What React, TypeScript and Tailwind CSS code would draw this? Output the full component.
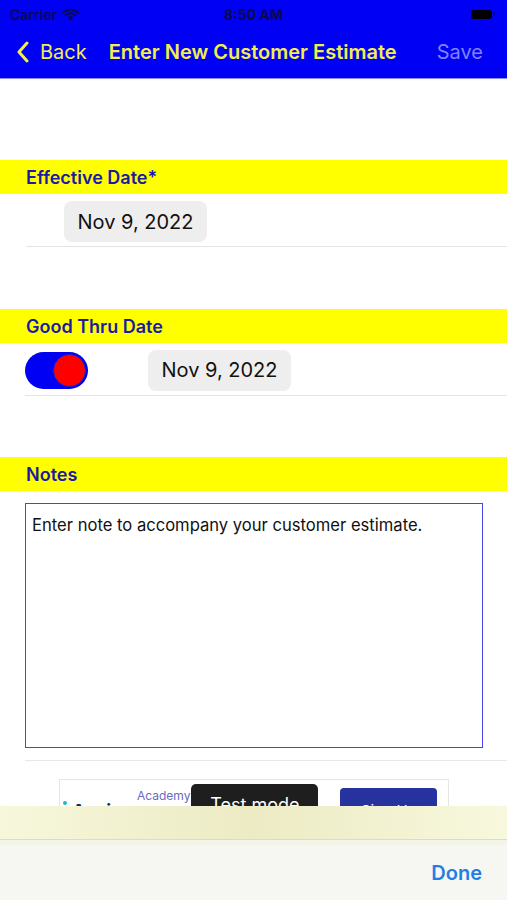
import React from 'react'

const font = { fontFamily: 'Inter, "Noto Sans", sans-serif' }

function SectionHeader({ title }: { title: string }) {
  return (
    <div className="h-[34px] bg-[#ffff00] flex items-center pl-[26px] pt-[1px]">
      <span className="text-[18px] font-semibold text-[#1a1aa6]">{title}</span>
    </div>
  )
}

function DatePill({ label }: { label: string }) {
  return (
    <div className="h-[41px] w-[143px] rounded-[8px] bg-[#eeeeef] flex items-center justify-center text-[20px] text-[#111]">
      {label}
    </div>
  )
}

export default function App() {
  return (
    <div className="relative w-[507px] h-[900px] overflow-hidden bg-white" style={font}>
      {/* status + nav bar */}
      <div className="bg-[#0000f5] h-[79px] border-b border-[#8c8cff]">
        <div className="h-[28px] flex items-center justify-between px-[10px] text-[14px] font-semibold text-[#0a0a4a]">
          <div className="flex items-center gap-[5px]">
            <span>Carrier</span>
            <svg width="17" height="13" viewBox="0 0 17 13">
              <path d="M8.5 12.5 L5.6 9.4 A4.2 4.2 0 0 1 11.4 9.4 Z" fill="#0a0a4a" />
              <path d="M3.4 7.2 A7.4 7.4 0 0 1 13.6 7.2" stroke="#0a0a4a" strokeWidth="2" fill="none" strokeLinecap="round" />
              <path d="M1.2 4.6 A10.6 10.6 0 0 1 15.8 4.6" stroke="#0a0a4a" strokeWidth="2" fill="none" strokeLinecap="round" />
            </svg>
          </div>
          <span className="absolute left-1/2 -translate-x-1/2 font-bold">8:50 AM</span>
          <div className="flex items-center pr-[2px]">
            <div className="w-[21px] h-[9px] rounded-[3px] bg-black" />
            <div className="w-[2px] h-[4px] rounded-r-sm bg-black/60 ml-[1px]" />
          </div>
        </div>
        <div className="h-[50px] flex items-center px-[16px] pb-[2px]">
          <svg width="14" height="22" viewBox="0 0 14 22" className="mr-[10px]">
            <path d="M11 2 L3 11 L11 20" stroke="#f2ee4a" strokeWidth="3" fill="none" strokeLinecap="round" strokeLinejoin="round" />
          </svg>
          <span className="text-[20px] text-[#f2ee4a]">Back</span>
          <span className="ml-[22px] text-[20px] font-semibold text-[#f2ee4a]">Enter New Customer Estimate</span>
          <span className="ml-auto text-[20px] text-[#8282ff] pr-[8px]">Save</span>
        </div>
      </div>

      <div className="h-[81px]" />

      <SectionHeader title="Effective Date*" />
      <div className="ml-[26px] h-[53px] flex items-center pl-[38px] pt-[3px] border-b border-[#e4e4e4]">
        <DatePill label="Nov 9, 2022" />
      </div>

      <div className="h-[62px]" />

      <SectionHeader title="Good Thru Date" />
      <div className="ml-[25px] h-[53px] flex items-center pt-[2px] border-b border-[#e4e4e4]">
        <div className="w-[63px] h-[37px] rounded-full bg-[#0000f5] flex items-center justify-end pr-[2px]">
          <div className="w-[33px] h-[33px] rounded-full bg-[#ff0000] border border-[#2020c0]" />
        </div>
        <div className="ml-[60px]">
          <DatePill label="Nov 9, 2022" />
        </div>
      </div>

      <div className="h-[61px]" />

      <SectionHeader title="Notes" />
      <div className="ml-[25px] border-b border-[#e8e8e8] pt-[12px] pb-[12px]">
        <div className="w-[458px] h-[245px] border border-[#4545e6] px-[6px] py-[9px] text-[16.6px] text-[#111]">
          Enter note to accompany your customer estimate.
        </div>
      </div>

      {/* ad banner */}
      <div className="mt-[18px] ml-[59px] w-[390px] h-[60px] border border-[#e6e6e6] flex items-start relative">
        <span className="absolute left-[3px] top-[21px] w-[4px] h-[4px] rounded-full bg-[#25b5c8]" />
        <span className="absolute left-[12px] top-[17px] text-[18px] font-bold text-[#1f2a50]">Acciona</span>
        <span className="ml-[77px] mt-[7px] text-[12px] text-[#6a6ac0]">Academy</span>
        <div className="ml-[1px] mt-[4px] w-[127px] h-[44px] rounded-[5px] bg-[#1e1e1e] text-white text-[18px] flex justify-center pt-[7px]">
          Test mode
        </div>
        <div className="ml-[22px] mt-[8px] w-[97px] h-[40px] rounded-[4px] bg-[#26329e] text-white text-[15px] flex justify-center pt-[12px]">
          Sign Up
        </div>
      </div>

      {/* keyboard accessory overlay */}
      <div className="absolute left-0 right-0 bottom-0 h-[94px] flex flex-col">
        <div className="h-[34px] bg-gradient-to-r from-[#f7f7dc] via-[#ecebc4] to-[#f8f8de] border-b border-[#deddb8]" />
        <div className="h-[5px] bg-[#f4f4e8]" />
        <div className="flex-1 bg-[#f6f6f2] flex items-center justify-end pr-[25px]">
          <span className="text-[20px] font-semibold text-[#1f7fe6]">Done</span>
        </div>
      </div>
    </div>
  )
}
